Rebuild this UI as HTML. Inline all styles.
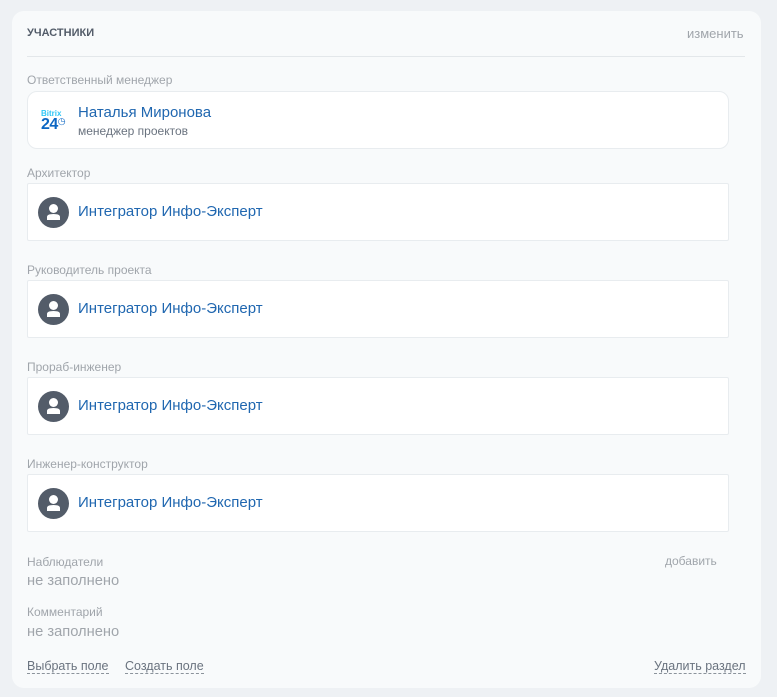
<!DOCTYPE html>
<html><head><meta charset="utf-8"><style>
*{margin:0;padding:0;box-sizing:border-box}
body{width:777px;height:697px;background:#eef1f4;font-family:"Liberation Sans",sans-serif;position:relative;overflow:hidden}
.card{position:absolute;left:12px;top:11px;width:749px;height:677px;background:#f8fafb;border-radius:12px}
.a{position:absolute}
.lbl{font-size:12px;color:#a0a5ab}
.box{position:absolute;left:27px;width:702px;height:58px;background:#fff;border:1px solid #e8ecef;border-radius:2px}
.av{position:absolute;left:10px;top:13px;width:31px;height:31px;border-radius:50%;background:#535c69;overflow:hidden}
.nm{position:absolute;left:50px;top:19px;font-size:15px;color:#2067b0}
.dl{font-size:12.5px;color:#6a737f;border-bottom:1px dashed #8b939b;line-height:14px}
</style></head><body>
<div class="card"></div>
<div class="a" style="left:27px;top:27px;font-size:11px;font-weight:bold;color:#535c69">УЧАСТНИКИ</div>
<div class="a" style="left:687px;top:26px;font-size:13px;color:#a0a5ab">изменить</div>
<div class="a" style="left:27px;top:56px;width:718px;height:1px;background:#e3e7ea"></div>
<div class="a lbl" style="left:27px;top:73px">Ответственный менеджер</div>
<div class="box" style="top:91px;height:58px;border-radius:10px">
 <div class="a" style="left:13px;top:17px;font-size:8px;font-weight:bold;color:#2fc6f6">Bitrix</div>
 <div class="a" style="left:13px;top:24px;font-size:16px;font-weight:bold;color:#0b66c3;letter-spacing:-0.5px">24<span style="font-size:9px;vertical-align:top;font-weight:normal">◷</span></div>
 <div class="a" style="left:50px;top:12px;font-size:15px;color:#2067b0">Наталья Миронова</div>
 <div class="a" style="left:50px;top:32px;font-size:12px;color:#6a737f">менеджер проектов</div>
</div>
<div class="a lbl" style="left:27px;top:166px">Архитектор</div>
<div class="box" style="top:183px"><div class="av"><svg width="31" height="31"><circle cx="15.5" cy="11.5" r="4.5" fill="#fff"/><path d="M9 23 L9 20 Q9 17 15.5 17 Q22 17 22 20 L22 23Z" fill="#fff"/></svg></div><div class="nm">Интегратор Инфо-Эксперт</div></div>
<div class="a lbl" style="left:27px;top:263px">Руководитель проекта</div>
<div class="box" style="top:280px"><div class="av"><svg width="31" height="31"><circle cx="15.5" cy="11.5" r="4.5" fill="#fff"/><path d="M9 23 L9 20 Q9 17 15.5 17 Q22 17 22 20 L22 23Z" fill="#fff"/></svg></div><div class="nm">Интегратор Инфо-Эксперт</div></div>
<div class="a lbl" style="left:27px;top:360px">Прораб-инженер</div>
<div class="box" style="top:377px"><div class="av"><svg width="31" height="31"><circle cx="15.5" cy="11.5" r="4.5" fill="#fff"/><path d="M9 23 L9 20 Q9 17 15.5 17 Q22 17 22 20 L22 23Z" fill="#fff"/></svg></div><div class="nm">Интегратор Инфо-Эксперт</div></div>
<div class="a lbl" style="left:27px;top:457px">Инженер-конструктор</div>
<div class="box" style="top:474px"><div class="av"><svg width="31" height="31"><circle cx="15.5" cy="11.5" r="4.5" fill="#fff"/><path d="M9 23 L9 20 Q9 17 15.5 17 Q22 17 22 20 L22 23Z" fill="#fff"/></svg></div><div class="nm">Интегратор Инфо-Эксперт</div></div>
<div class="a lbl" style="left:27px;top:555px">Наблюдатели</div>
<div class="a lbl" style="left:665px;top:554px">добавить</div>
<div class="a" style="left:27px;top:573px;font-size:14.7px;color:#a0a5ab">не заполнено</div>
<div class="a lbl" style="left:27px;top:605px">Комментарий</div>
<div class="a" style="left:27px;top:624px;font-size:14.7px;color:#a0a5ab">не заполнено</div>
<div class="a dl" style="left:27px;top:659px">Выбрать поле</div>
<div class="a dl" style="left:125px;top:659px">Создать поле</div>
<div class="a dl" style="left:654px;top:659px">Удалить раздел</div>
</body></html>
